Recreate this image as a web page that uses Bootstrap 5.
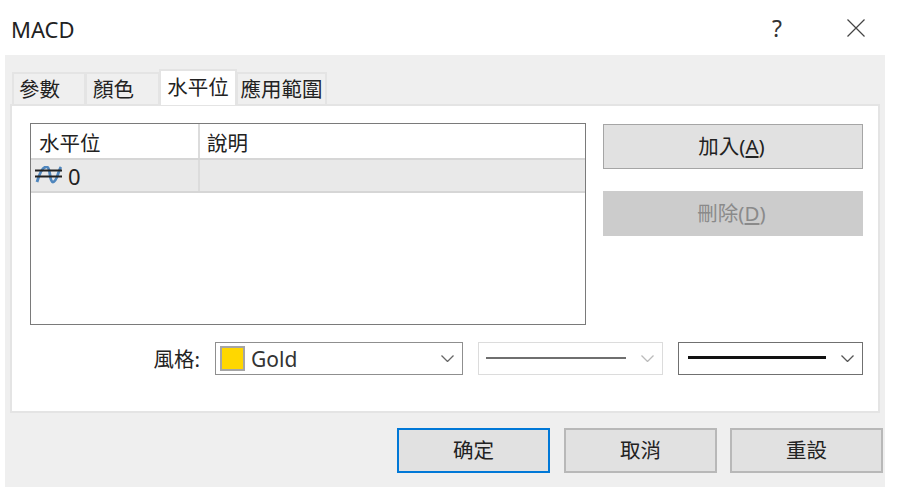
<!DOCTYPE html>
<html lang="zh-Hant">
<head>
<meta charset="utf-8">
<title>MACD</title>
<link rel="stylesheet" href="https://cdn.jsdelivr.net/npm/bootstrap@5.3.0/dist/css/bootstrap.min.css">
<style>
html,body{height:500px;overflow:hidden;background:#fff}
body{font-family:"Noto Sans","Noto Sans CJK TC",sans-serif;color:#222;font-size:20.5px;line-height:1.2}
.titlebar{height:55px;padding:0 35px 0 11px}
.titletext{font-size:22px;padding-top:3px}
.helpmark{width:20px;text-align:center;font-size:23px;margin-right:60px;padding-top:2px;color:#333}
.closemark{display:block;width:18px;height:18px}
.shell{width:880px;height:432px;margin-left:5px;background:#efefef;padding:14px 5px 0}
.tabrow{height:35px;padding-left:2px;border:0;align-items:flex-end;flex-wrap:nowrap;margin-bottom:0}
.tabrow .nav-link{height:32px;padding:0;margin:0;border:2px solid #e4e4e4;border-bottom:0;border-radius:0;background:#efefef;color:#222;text-align:center;font-size:20.5px;line-height:31px;white-space:nowrap;margin-left:-1px}
.tabrow .nav-link.active{height:36px;margin-bottom:-1px;background:#fff;color:#222;border-color:#e4e4e4;position:relative;z-index:1;line-height:33px}
.tab-a{width:74px;margin-left:0!important;text-align:left!important;padding-left:5px!important}
.tab-b{width:75px;text-align:left!important;padding-left:6px!important}
.tab-c{width:78px}.tab-d{width:91px}
.panelbox{height:309px;background:#fff;border:2px solid #e4e4e4;padding:17px 15px 0 18px}
.toprow{height:203px;gap:17px}
.levelbox{width:556px;height:202px;border:1px solid #7a7a7a;flex:none}
.lhead{height:36px;border-bottom:2px solid #d6d6d6}
.lrow{height:33px;background:#e9e9e9;border-bottom:2px solid #d6d6d6}
.colone{width:169px;border-right:2px solid #dcdcdc;padding-left:8px;flex:none;line-height:38px}
.colone.rowcell{padding-left:4px;line-height:32px;display:flex;align-items:center;gap:5px;font-size:22px}
.coltwo{padding-left:7px;line-height:38px;flex:1;height:100%}
.lvicon{width:28px;height:20px;flex:none}
.sidebtns{width:260px;gap:22px;padding-top:1px}
.winbtn{height:45px;border:1px solid #a5a5a5;border-radius:0;background:#e1e1e1;color:#222;font-size:20.5px;line-height:1.2;padding:0 3px 0 0}
.winbtn:hover{background:#e1e1e1;color:#222;border-color:#a5a5a5}
.winbtn:disabled,.winbtn.disabled{background:#cccccc;border-color:#cccccc;color:#8a8a8a;opacity:1}
.stylerow{margin-top:16px;height:33px}
.stylelabel{width:186px;text-align:right;padding-right:15px;padding-top:5px}
.combo{height:33px;border:1px solid #8f8f8f;background:#fff;padding:0 8px 0 9px;font-size:21px;flex:none}
.combo-name{width:248px;padding-left:4px}
.combo-line{width:185px;margin-left:15px}
.combo-line.dim{border-color:#dcdcdc;padding-left:7px}
.combo-line.strong{border-color:#707070}
.swatch{width:25px;height:25px;background:#ffd700;border:2px solid #a5a5a5;flex:none;margin-right:6px}
.namebit{color:#333;flex:1;padding-top:3px}
.linebit{flex:1;margin-right:15px;margin-bottom:2px;height:0}
.dimline{border-top:2px solid #6f6f6f}
.strongline{border-top:3px solid #111}
.chev{width:13px;height:7px;flex:none}
.footbar{gap:14px;padding-top:15px;margin-right:-3px}
.footbar .winbtn{width:153px;border-width:2px;border-color:#b8b8b8;padding:0}
.footbar .winbtn.primaryish{border-color:#0078d7}
.footbar .winbtn+.winbtn+.winbtn{margin-left:-1px}
.accesskey{text-decoration:underline}
</style>
</head>
<body>
<header class="titlebar d-flex align-items-center">
  <div class="titletext flex-grow-1">MACD</div>
  <div class="helpmark">?</div>
  <svg class="closemark" viewBox="0 0 18 18" aria-label="關閉"><path d="M0.5 .5L17.5 17.5M17.5 .5L.5 17.5" stroke="#444" stroke-width="1.2" fill="none"/></svg>
</header>
<main class="shell">
  <ul class="nav nav-tabs tabrow">
    <li class="nav-item"><a class="nav-link tab-a" href="#">參數</a></li>
    <li class="nav-item"><a class="nav-link tab-b" href="#">顏色</a></li>
    <li class="nav-item"><a class="nav-link tab-c active" href="#">水平位</a></li>
    <li class="nav-item"><a class="nav-link tab-d" href="#">應用範圍</a></li>
  </ul>
  <section class="panelbox">
    <div class="d-flex toprow">
      <div class="levelbox">
        <div class="d-flex lhead"><div class="colone">水平位</div><div class="coltwo">說明</div></div>
        <div class="d-flex lrow">
          <div class="colone rowcell">
            <svg class="lvicon" viewBox="0 0 28 20"><path d="M2 16C5 6 8 0 12 1S14 16 18 16 23 5 26 1" fill="none" stroke="#4f86bd" stroke-width="2.8"/><path d="M0 4.500H27M0 10.500H27" stroke="#222" stroke-width="2"/></svg>
            <span>0</span>
          </div>
          <div class="coltwo"></div>
        </div>
      </div>
      <div class="d-flex flex-column sidebtns">
        <button type="button" class="btn winbtn">加入(<span class="accesskey">A</span>)</button>
        <button type="button" class="btn winbtn" disabled>刪除(<span class="accesskey">D</span>)</button>
      </div>
    </div>
    <div class="d-flex stylerow">
      <div class="stylelabel">風格:</div>
      <div class="combo combo-name d-flex align-items-center">
        <span class="swatch"></span><span class="namebit">Gold</span>
        <svg class="chev" viewBox="0 0 13 7"><path d="M.5 .5L6.500 6.500L12.500 .5" fill="none" stroke="#666" stroke-width="1.300"/></svg>
      </div>
      <div class="combo combo-line dim d-flex align-items-center">
        <span class="linebit dimline"></span>
        <svg class="chev" viewBox="0 0 13 7"><path d="M.5 .5L6.500 6.500L12.500 .5" fill="none" stroke="#bbb" stroke-width="1.300"/></svg>
      </div>
      <div class="combo combo-line strong d-flex align-items-center">
        <span class="linebit strongline"></span>
        <svg class="chev" viewBox="0 0 13 7"><path d="M.5 .5L6.500 6.500L12.500 .5" fill="none" stroke="#555" stroke-width="1.300"/></svg>
      </div>
    </div>
  </section>
  <footer class="d-flex justify-content-end footbar">
    <button type="button" class="btn winbtn primaryish">确定</button>
    <button type="button" class="btn winbtn">取消</button>
    <button type="button" class="btn winbtn">重設</button>
  </footer>
</main>
<script src="https://cdn.jsdelivr.net/npm/bootstrap@5.3.0/dist/js/bootstrap.bundle.min.js"></script>
</body>
</html>
